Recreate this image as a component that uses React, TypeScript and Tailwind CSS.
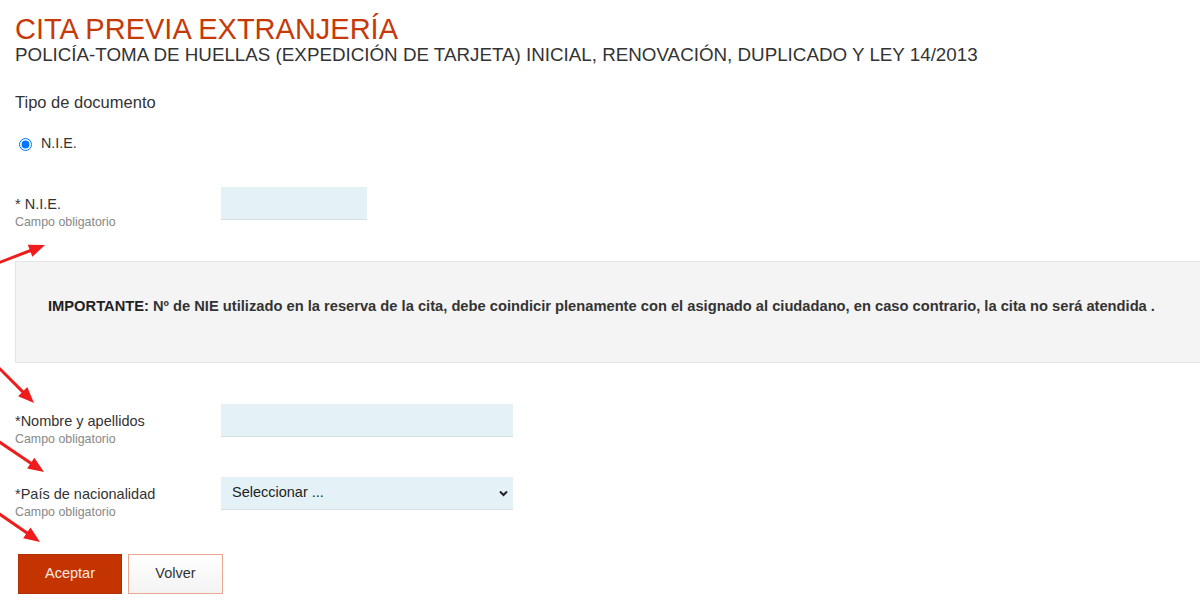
import React from 'react';

type Arrow = { x1: number; y1: number; x2: number; y2: number };

const arrows: Arrow[] = [
  { x1: -2, y1: 263, x2: 45, y2: 245 },
  { x1: -2, y1: 367, x2: 34, y2: 403 },
  { x1: -2, y1: 441, x2: 44, y2: 472 },
  { x1: -2, y1: 513, x2: 40, y2: 542 },
];

function ArrowMark({ x1, y1, x2, y2 }: Arrow) {
  const dx = x2 - x1;
  const dy = y2 - y1;
  const len = Math.hypot(dx, dy);
  const ux = dx / len;
  const uy = dy / len;
  const head = 16;
  const half = 6.5;
  const bx = x2 - ux * head;
  const by = y2 - uy * head;
  const pts = `${x2},${y2} ${bx - uy * half},${by + ux * half} ${bx + uy * half},${by - ux * half}`;
  return (
    <g>
      <line x1={x1} y1={y1} x2={bx + ux * 2} y2={by + uy * 2} stroke="#ee1c1c" strokeWidth={3} />
      <polygon points={pts} fill="#ee1c1c" />
    </g>
  );
}

function FieldLabel({ text }: { text: string }) {
  return (
    <div className="w-[206px] shrink-0 pt-[9px]">
      <p className="text-[14.5px] leading-[17px] text-[#333]">{text}</p>
      <p className="mt-[2px] text-[12.4px] leading-[14px] text-[#888]">Campo obligatorio</p>
    </div>
  );
}

export default function App() {
  return (
    <div className="relative min-h-[609px] overflow-hidden bg-white pl-[15px] pt-[13px] font-['Liberation_Sans',Arial,sans-serif]">
      <h1 className="text-[29px] leading-[32px] text-[#c63a0a]">CITA PREVIA EXTRANJERÍA</h1>
      <h2 className="text-[18.8px] leading-[19px] text-[#333]">
        POLICÍA-TOMA DE HUELLAS (EXPEDICIÓN DE TARJETA) INICIAL, RENOVACIÓN, DUPLICADO Y LEY 14/2013
      </h2>

      <p className="mt-[28px] text-[16.5px] leading-[20px] text-[#333]">Tipo de documento</p>

      <label className="mt-[22px] flex h-[20px] items-center gap-[9px]">
        <input type="radio" checked readOnly className="m-0 ml-[4px] h-[13px] w-[13px]" />
        <span className="text-[14.3px] text-[#333]">N.I.E.</span>
      </label>

      <div className="mt-[33px] flex h-[42px]">
        <FieldLabel text="* N.I.E." />
        <input type="text" className="h-[33px] w-[146px] border-b border-[#d3dfe3] bg-[#e4f2f7] px-2 outline-none" />
      </div>

      <div className="mt-[32px] h-[102px] border border-r-0 border-[#e4e4e4] bg-[#f4f4f4] pl-[32px] pt-[36px]">
        <p className="text-[14.7px] font-bold leading-[17px] text-[#333]">
          <span className="text-[#222]">IMPORTANTE:</span> Nº de NIE utilizado en la reserva de la cita, debe coindicir
          plenamente con el asignado al ciudadano, en caso contrario, la cita no será atendida .
        </p>
      </div>

      <div className="mt-[41px] flex h-[42px]">
        <FieldLabel text="*Nombre y apellidos" />
        <input type="text" className="h-[33px] w-[292px] border-b border-[#d3dfe3] bg-[#e4f2f7] px-2 outline-none" />
      </div>

      <div className="mt-[31px] flex h-[42px]">
        <FieldLabel text="*País de nacionalidad" />
        <div className="relative h-[33px] w-[292px]">
          <select className="h-full w-full appearance-none border-b border-[#d3dfe3] bg-[#e4f2f7] pl-[11px] text-[14.5px] text-[#222] outline-none">
            <option>Seleccionar ...</option>
          </select>
          <svg className="pointer-events-none absolute right-[5px] top-[13px]" width="9" height="7" viewBox="0 0 9 7">
            <path d="M1 1.5 L4.5 5 L8 1.5" fill="none" stroke="#222" strokeWidth="2" />
          </svg>
        </div>
      </div>

      <div className="mt-[35px] flex gap-[6px] pl-[3px]">
        <button className="h-[40px] w-[104px] border border-[#b32f00] bg-[#c33400] text-[14.5px] text-[#fbe9e2]">
          Aceptar
        </button>
        <button className="h-[40px] w-[95px] border border-[#eaa691] bg-gradient-to-b from-white to-[#f3f3f3] text-[14.5px] text-[#333]">
          Volver
        </button>
      </div>

      <svg className="pointer-events-none absolute left-0 top-0" width="1200" height="609">
        {arrows.map((a, i) => (
          <ArrowMark key={i} {...a} />
        ))}
      </svg>
    </div>
  );
}
